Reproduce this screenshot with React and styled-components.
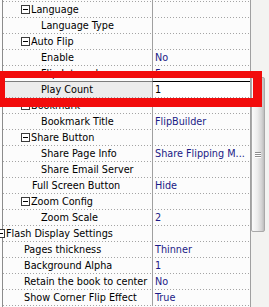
import React from "react";
import styled, { createGlobalStyle, css } from "styled-components";

const GlobalStyle = createGlobalStyle`
  html, body { margin: 0; padding: 0; background: #ffffff; overflow: hidden; }
  * { box-sizing: border-box; }
`;

const Frame = styled.div`
  position: relative;
  width: 269px;
  height: 307px;
  overflow: hidden;
  display: flex;
  padding-left: 2px;
  background: #fcfcfc;
  font-family: "DejaVu Sans Condensed", "Liberation Sans", sans-serif;
  font-size: 10.75px;
`;

const Grid = styled.div`
  width: 248px;
  flex: none;
  border-left: 1px solid #8c8c8c;
  background: #fcfcfc;
`;

const List = styled.div`
  margin-top: -14px;
`;

const dots = css`
  background-image: linear-gradient(to right, #a4a4a4 1px, transparent 1px);
  background-size: 3px 1px;
  background-repeat: repeat-x;
  background-position: 0 100%;
`;

const Row = styled.div`
  display: grid;
  grid-template-columns: 149px 98px;
  height: 16px;
  ${(p) => p.$selected && css`
    height: 17px;
    margin-top: -1px;
  `}
`;

const NameCell = styled.div`
  display: flex;
  align-items: center;
  gap: 1px;
  padding-left: ${(p) => p.$indent}px;
  padding-bottom: 1px;
  line-height: 15px;
  color: #000000;
  white-space: nowrap;
  ${dots}
  ${(p) => p.$selected && css`
    background-color: #ececec;
    border-top: 1px solid #7c7c7c;
  `}
`;

const ValueCell = styled.div`
  border-left: 1px solid #a0a0a0;
  padding-left: 2px;
  padding-right: 1px;
  padding-bottom: 1px;
  line-height: 15px;
  color: #1a1a86;
  white-space: nowrap;
  overflow: hidden;
  text-overflow: ellipsis;
  ${dots}
  background-position: 2px 100%;
  ${(p) => p.$selected && css`
    background-color: #ffffff;
    border-top: 1px solid #000000;
    color: #000000;
  `}
`;

const BoxIcon = styled.svg`
  flex: none;
  width: 9px;
  height: 9px;
  margin-left: ${(p) => p.$shift || 0}px;
  display: block;
`;

const Scrollbar = styled.div`
  width: 19px;
  flex: none;
  border-left: 1px solid #a0a0a0;
  background: #f3f3f1;
  padding-top: 77px;
`;

const Thumb = styled.div`
  width: 14px;
  height: 155px;
  border: 1px solid #a9a9a9;
  border-radius: 2px;
  background: linear-gradient(to right, #fbfbfb 0%, #ececec 45%, #d4d4d4 80%, #bdbdbd 100%);
  display: flex;
  flex-direction: column;
  align-items: center;
  justify-content: center;
  gap: 1px;
`;

const Grip = styled.div`
  width: 6px;
  height: 1px;
  background: #8e8e8e;
  box-shadow: 0 1px 0 #ffffff;
`;

const Highlight = styled.div`
  position: absolute;
  left: -3px;
  top: 71px;
  width: 265px;
  height: 36px;
  border-style: solid;
  border-color: #f20c0c;
  border-width: 7px 9px 9px 8px;
  pointer-events: none;
`;

const rows = [
  { name: "", level: 2 },
  { cat: true, level: 1, name: "Language" },
  { level: 2, name: "Language Type" },
  { cat: true, level: 1, name: "Auto Flip" },
  { level: 2, name: "Enable", value: "No" },
  { level: 2, name: "Flip Interval", value: "5" },
  { level: 2, name: "Play Count", value: "1", selected: true },
  { cat: true, level: 1, name: "Bookmark" },
  { level: 2, name: "Bookmark Title", value: "FlipBuilder" },
  { cat: true, level: 1, name: "Share Button" },
  { level: 2, name: "Share Page Info", value: "Share Flipping M..." },
  { level: 2, name: "Share Email Server" },
  { level: 1, name: "Full Screen Button", value: "Hide" },
  { cat: true, level: 1, name: "Zoom Config" },
  { level: 2, name: "Zoom Scale", value: "2" },
  { cat: true, level: 0, name: "Flash Display Settings" },
  { level: 0, name: "Pages thickness", value: "Thinner" },
  { level: 0, name: "Background Alpha", value: "1" },
  { level: 0, name: "Retain the book to center", value: "No" },
  { level: 0, name: "Show Corner Flip Effect", value: "True" },
];

const leafIndent = { 0: 21, 1: 29, 2: 38 };
const catIndent = { 0: 0, 1: 18 };

function Collapse({ shift }) {
  return (
    <BoxIcon viewBox="0 0 9 9" $shift={shift}>
      <rect x="0.5" y="0.5" width="8" height="8" fill="#ffffff" stroke="#3a3a3a" />
      <rect x="2" y="4" width="5" height="1" fill="#000000" />
    </BoxIcon>
  );
}

export default function App() {
  return (
    <>
      <GlobalStyle />
      <Frame>
        <Grid>
          <List>
            {rows.map((r, i) => (
              <Row key={i} $selected={r.selected}>
                <NameCell
                  $indent={r.cat ? catIndent[r.level] : leafIndent[r.level]}
                  $selected={r.selected}
                >
                  {r.cat && <Collapse shift={r.level === 0 ? -7 : 0} />}
                  <span>{r.name}</span>
                </NameCell>
                <ValueCell $selected={r.selected}>{r.value || ""}</ValueCell>
              </Row>
            ))}
          </List>
        </Grid>
        <Scrollbar>
          <Thumb>
            <Grip />
            <Grip />
            <Grip />
          </Thumb>
        </Scrollbar>
        <Highlight />
      </Frame>
    </>
  );
}
